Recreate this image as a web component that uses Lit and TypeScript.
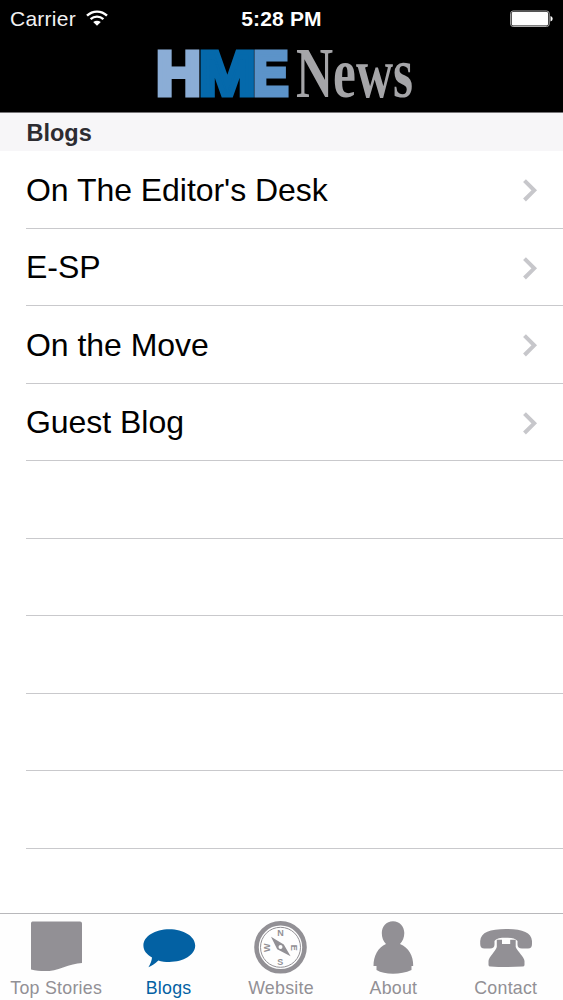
import { LitElement, html, css, svg } from 'lit';
import { customElement, property } from 'lit/decorators.js';

const TAB_ICONS: Record<string, unknown> = {
  stories: svg`<path d="M32.5 7.5H80Q82 7.5 82 9.500V49C76 49.500 70 51 63 53.500C53 57.800 42 58 31 55.500V9.500Q31 7.500 32.500 7.500Z"/>`,
  blogs: svg`<path d="M56.300 15.300C70.500 15.300 82.200 22.300 82.200 31.600S70.500 48 56.300 48C52.500 48 48.500 47.500 45.300 46.500C42 50 39 51.700 35.400 53.200C37.500 50 38.800 46.500 39 43.500C33.500 40.500 30.400 36.500 30.400 31.600C30.400 22.300 42 15.300 56.300 15.300Z"/>`,
  website: svg`
    <circle cx="55.500" cy="33.300" r="24" fill="none" stroke="currentColor" stroke-width="4.600"/>
    <circle cx="55.500" cy="33.300" r="20" fill="none" stroke="currentColor" stroke-width="1"/>
    <path fill-rule="evenodd" d="M46 22.800L58.800 30.400L65.600 42.300L52.200 35.300ZM55.500 30.900A2 2 0 1 0 55.500 34.900A2 2 0 1 0 55.500 30.900Z"/>
    <g class="dial">
      <text x="55.500" y="22.300">N</text>
      <text x="55.200" y="50.700">S</text>
      <text transform="translate(45 33.700) rotate(-90)">W</text>
      <text transform="translate(66.300 33.700) rotate(90)">E</text>
    </g>`,
  about: svg`<path d="M56 7.200C62.800 7.200 67.300 12.500 67.300 19C67.300 23.500 65.600 27.500 63 30C71.500 33.500 76.500 42 76.200 52H74.500V56Q66 59.800 56 59.800T39.500 56V52H36.500C36.500 42 41 33.500 49 30C46.300 27.500 44.800 23.500 44.800 19C44.800 12.500 49.200 7.200 56 7.200Z"/>`,
  contact: svg`
    <path d="M30.200 27C30.800 18 40 14.900 56 14.900S81.300 18 82 27V30Q82 34.500 78 34.500H72Q67.500 34.500 67.500 30.500V27C65 24.200 62 23.800 56 23.800S47 24.200 44.500 27V30.500Q44.500 34.500 40 34.500H34.500Q30.200 34.500 30.200 30Z"/>
    <path d="M46.800 25.800H52V30H60.200V25.800H65.700V33C67.500 37.500 74.300 43 74.500 47V51Q74.500 52.500 72.500 52.500Q56 53.500 40.500 52.500Q38.500 52.500 38.500 51V47C38.700 43 45.500 37.500 46.800 33Z"/>`,
};

@customElement('status-bar')
export class StatusBar extends LitElement {
  static styles = css`
    :host { display: grid; grid-template-columns: 1fr auto 1fr; align-items: center;
      height: 37px; padding: 0 10px; box-sizing: border-box; color: #fff; font-size: 21px; line-height: 37px; }
    .left { display: flex; align-items: center; gap: 10px; color: #f2f2f2; letter-spacing: .25px; }
    .time { font-weight: bold; letter-spacing: 0.15px; }
    .wifi { display: block; margin-bottom: 2px; }
    .battery { display: block; justify-self: end; }
  `;
  render() {
    return html`
      <div class="left"><span>Carrier</span>
        <svg class="wifi" width="22" height="16" viewBox="0 0 22 16" fill="none" stroke="#fff" stroke-width="2.4">
          <path d="M1 5.700C6.700 .2 15.300 .2 21 5.700"/>
          <path d="M4.600 9.200C8.300 5.800 13.700 5.800 17.400 9.200"/>
          <path d="M11 15.800L7.200 12.100C9.500 10.200 12.500 10.200 14.800 12.100Z" fill="#fff" stroke="none"/>
        </svg>
      </div>
      <span class="time">5:28 PM</span>
      <svg class="battery" width="43" height="18" viewBox="0 0 43 18">
        <rect x=".6" y="1" width="38.600" height="15.500" rx="2.500" fill="none" stroke="#aaa"/>
        <rect x="1.700" y="2.100" width="36.400" height="13.300" rx="1.300" fill="#fff"/>
        <path d="M40.500 6Q42.700 6.700 42.700 8.700T40.500 11.500Z" fill="#fff"/>
      </svg>`;
  }
}

@customElement('brand-bar')
export class BrandBar extends LitElement {
  static styles = css`
    :host { display: flex; height: 75px; padding-left: 150px; }
    .logo { display: block; overflow: visible; }
    .block { font: bold 62.500px "Liberation Sans", Arial, sans-serif; stroke-width: 5; }
    .serif { font: bold 72px "Liberation Serif", "Times New Roman", serif; fill: #a5a5a8; }
    .h { fill: #8badd6; stroke: #8badd6; }
    .m { fill: #0569ab; stroke: #0569ab; }
    .e { fill: #5c93c9; stroke: #5c93c9; }
  `;
  render() {
    return html`
      <svg class="logo" width="270" height="75" viewBox="150 37 270 75">
        <g class="block">
          <text class="h" x="156" y="94.600" textLength="45" lengthAdjust="spacingAndGlyphs">H</text>
          <text class="e" x="253" y="94.600" textLength="35.500" lengthAdjust="spacingAndGlyphs">E</text>
          <text class="m" x="198.800" y="94.600" textLength="57" lengthAdjust="spacingAndGlyphs">M</text>
        </g>
        <text class="serif" x="296" y="96.700" textLength="117" lengthAdjust="spacingAndGlyphs">News</text>
      </svg>`;
  }
}

@customElement('blog-list')
export class BlogList extends LitElement {
  @property({ attribute: false }) items: string[] = [];
  @property({ type: Number }) rows = 9;
  static styles = css`
    :host { display: block; }
    .heading { height: 39px; box-sizing: border-box; line-height: 41px; padding-left: 26.500px; background: #f7f6f8;
      border-top: 1px solid #777578; color: #2d2c31; font-size: 23.500px; font-weight: bold; }
    .row { display: flex; align-items: center; justify-content: space-between; height: 77.500px;
      box-sizing: border-box; margin-left: 26px; padding: 2px 25px 0 0; border-bottom: 1px solid #c9c9cc;
      font-size: 32px; letter-spacing: -.04px; color: #000; }
    .chevron { display: block; }
  `;
  render() {
    return html`
      <div class="heading">Blogs</div>
      ${Array.from({ length: this.rows }, (_, i) => html`
        <div class="row">${this.items[i] ? html`
          <span>${this.items[i]}</span>
          <svg class="chevron" width="17" height="24" viewBox="0 0 17 24" fill="none" stroke="#c7c7cb" stroke-width="4">
            <path d="M3.500 2.700L13.200 12.300L3.500 22"/>
          </svg>` : ''}</div>`)}`;
  }
}

@customElement('tab-bar')
export class TabBar extends LitElement {
  @property() active = 'blogs';
  static styles = css`
    :host { display: grid; grid-template-columns: repeat(5, 1fr); height: 87px; box-sizing: border-box;
      border-top: 1px solid #b8b8bb; background: #fefefe; padding-right: 1px; }
    .tab { display: flex; flex-direction: column; align-items: center; color: #929095; }
    .active { color: #0361a3; }
    .icon { display: block; fill: currentColor; }
    .dial { font: bold 9px "Liberation Sans", Arial, sans-serif; text-anchor: middle; }
    .label { font-size: 17.800px; line-height: 22px; letter-spacing: .25px; white-space: nowrap; }
  `;
  private tabs = [['stories', 'Top Stories'], ['blogs', 'Blogs'], ['website', 'Website'], ['about', 'About'], ['contact', 'Contact']];
  render() {
    return this.tabs.map(([id, label]) => html`
      <div class="tab ${id === this.active ? 'active' : ''}">
        <svg class="icon" width="112" height="63" viewBox="0 0 112 63">${TAB_ICONS[id]}</svg>
        <span class="label">${label}</span>
      </div>`);
  }
}

@customElement('app-root')
export class AppRoot extends LitElement {
  static styles = css`
    :host { display: flex; flex-direction: column; height: 1000px; overflow: hidden; background: #fff;
      font-family: "Liberation Sans", Arial, sans-serif; }
    .top { background: #000; }
    .content { flex: 1; min-height: 0; }
  `;
  render() {
    return html`
      <div class="top"><status-bar></status-bar><brand-bar></brand-bar></div>
      <blog-list class="content" .items=${["On The Editor's Desk", 'E-SP', 'On the Move', 'Guest Blog']}></blog-list>
      <tab-bar active="blogs"></tab-bar>`;
  }
}
